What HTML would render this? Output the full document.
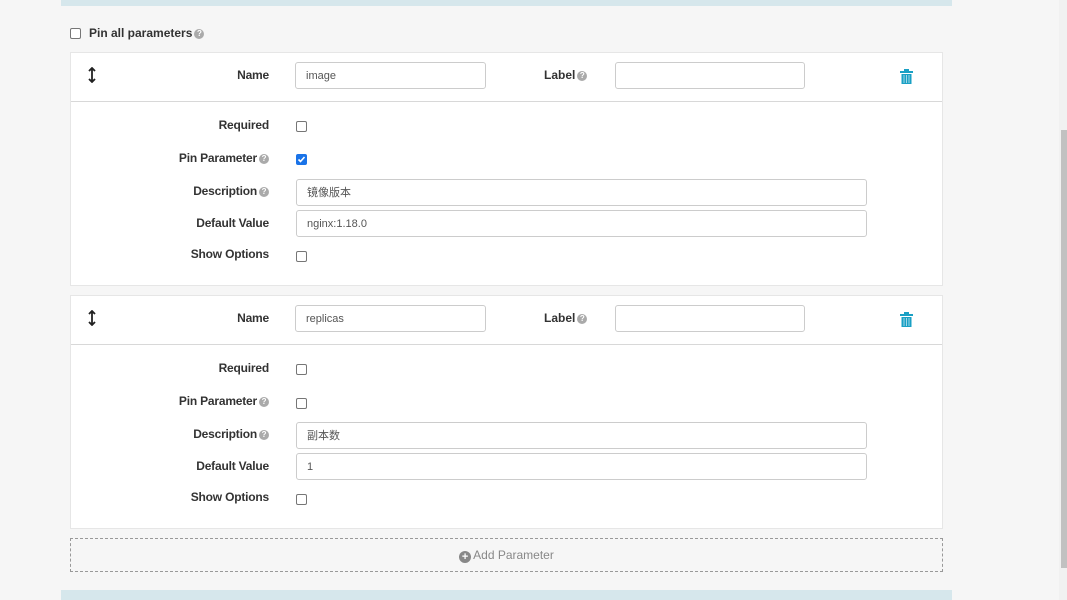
<!DOCTYPE html>
<html><head><meta charset="utf-8"><style>
*{box-sizing:border-box;margin:0;padding:0}
body{width:1067px;height:600px;overflow:hidden;background:#f6f6f6;font-family:"Liberation Sans","Noto Sans CJK SC",sans-serif;font-size:12px;color:#333;position:relative}
.a{position:absolute}
.bar{left:61px;width:891px;background:#d6e7ec}
.card{left:70px;width:873px;height:234px;background:#fff;border:1px solid #e6e6e6}
.hr{left:0;right:0;top:48px;border-top:1px solid #d8d8d8}
.lbl{font-weight:bold;text-align:right;width:198px;font-size:12px;letter-spacing:-0.2px}
.inp{background:#fff;border:1px solid #ccc;border-radius:3px;height:27px;padding-left:10px;line-height:26px;font-size:11px;color:#555}
.cb{width:11px;height:11px;border:1px solid #767676;border-radius:2px;background:#fff}
.cbc{width:11px;height:11px;border-radius:2px;background:#1a73e8}
.q{display:inline-block;width:10px;height:10px;border-radius:50%;background:#aaa;color:#fff;font-size:8px;line-height:10px;text-align:center;vertical-align:1px;margin-left:2px;font-weight:bold}
</style></head><body>
<div class="a bar" style="top:0;height:6px"></div>
<div class="a bar" style="top:590px;height:10px"></div>
<div class="a" style="left:1059px;top:0;width:8px;height:600px;background:#f1f1f1"></div>
<div class="a" style="left:1061px;top:130px;width:6px;height:438px;background:#c1c1c1"></div>

<div class="a cb" style="left:70px;top:28px"></div>
<div class="a" style="left:89px;top:26px;font-weight:bold">Pin all parameters<span class="q">?</span></div>

<!-- card 1 -->
<div class="a card" style="top:52px">
 <div class="a hr"></div>
 <svg class="a" style="left:16px;top:14px" width="10" height="16" viewBox="0 0 10 16"><path d="M5 1v14M2 4l3-3 3 3M2 12l3 3 3-3" stroke="#222" stroke-width="1.8" fill="none"/></svg>
 <div class="a lbl" style="left:0;top:15px">Name</div>
 <div class="a inp" style="left:224px;top:9px;width:191px">image</div>
 <div class="a" style="left:473px;top:15px;font-weight:bold">Label<span class="q">?</span></div>
 <div class="a inp" style="left:544px;top:9px;width:190px"></div>
 <svg class="a" style="left:829px;top:16px" width="13" height="15" viewBox="0 0 13 15"><rect x="0" y="2" width="13" height="2" fill="#1aa0c4"/><rect x="4" y="0" width="5" height="2" fill="#1aa0c4"/><rect x="1.5" y="5" width="10" height="10" fill="#1aa0c4"/><path d="M4 6v8M6.5 6v8M9 6v8" stroke="#9fd6e6" stroke-width="1"/></svg>
 <div class="a lbl" style="left:0;top:65px">Required</div>
 <div class="a cb" style="left:225px;top:68px"></div>
 <div class="a lbl" style="left:0;top:98px">Pin Parameter<span class="q">?</span></div>
 <div class="a cbc" style="left:225px;top:101px"><svg width="11" height="11" viewBox="0 0 11 11"><path d="M2.5 5.5l2 2 4-4.5" stroke="#fff" stroke-width="1.6" fill="none"/></svg></div>
 <div class="a lbl" style="left:0;top:131px">Description<span class="q">?</span></div>
 <div class="a inp" style="left:225px;top:126px;width:571px">镜像版本</div>
 <div class="a lbl" style="left:0;top:163px">Default Value</div>
 <div class="a inp" style="left:225px;top:157px;width:571px">nginx:1.18.0</div>
 <div class="a lbl" style="left:0;top:194px">Show Options</div>
 <div class="a cb" style="left:225px;top:198px"></div>
</div>

<!-- card 2 -->
<div class="a card" style="top:295px">
 <div class="a hr"></div>
 <svg class="a" style="left:16px;top:14px" width="10" height="16" viewBox="0 0 10 16"><path d="M5 1v14M2 4l3-3 3 3M2 12l3 3 3-3" stroke="#222" stroke-width="1.8" fill="none"/></svg>
 <div class="a lbl" style="left:0;top:15px">Name</div>
 <div class="a inp" style="left:224px;top:9px;width:191px">replicas</div>
 <div class="a" style="left:473px;top:15px;font-weight:bold">Label<span class="q">?</span></div>
 <div class="a inp" style="left:544px;top:9px;width:190px"></div>
 <svg class="a" style="left:829px;top:16px" width="13" height="15" viewBox="0 0 13 15"><rect x="0" y="2" width="13" height="2" fill="#1aa0c4"/><rect x="4" y="0" width="5" height="2" fill="#1aa0c4"/><rect x="1.5" y="5" width="10" height="10" fill="#1aa0c4"/><path d="M4 6v8M6.5 6v8M9 6v8" stroke="#9fd6e6" stroke-width="1"/></svg>
 <div class="a lbl" style="left:0;top:65px">Required</div>
 <div class="a cb" style="left:225px;top:68px"></div>
 <div class="a lbl" style="left:0;top:98px">Pin Parameter<span class="q">?</span></div>
 <div class="a cb" style="left:225px;top:102px"></div>
 <div class="a lbl" style="left:0;top:131px">Description<span class="q">?</span></div>
 <div class="a inp" style="left:225px;top:126px;width:571px">副本数</div>
 <div class="a lbl" style="left:0;top:163px">Default Value</div>
 <div class="a inp" style="left:225px;top:157px;width:571px">1</div>
 <div class="a lbl" style="left:0;top:194px">Show Options</div>
 <div class="a cb" style="left:225px;top:198px"></div>
</div>

<div class="a" style="left:70px;top:538px;width:873px;height:34px;border:1px dashed #999;text-align:center;line-height:32px;color:#888;font-size:12px">
 <span style="display:inline-block;width:12px;height:12px;border-radius:50%;background:#888;color:#fff;font-size:11px;line-height:12px;font-weight:bold;vertical-align:-1px;margin-right:2px">+</span>Add Parameter
</div>
</body></html>
